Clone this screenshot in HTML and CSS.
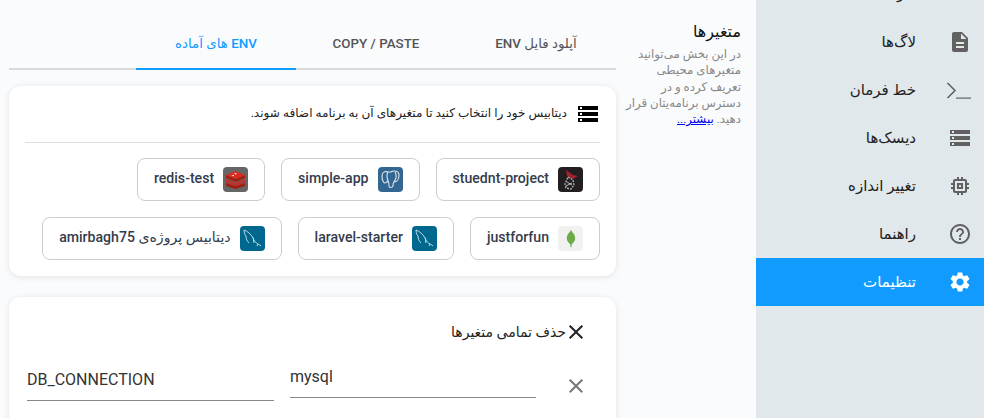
FILE: index.html
```html
<!DOCTYPE html>
<html lang="fa" dir="rtl">
<head>
    <meta charset="UTF-8">
    <title>متغیرها</title>
    <link rel="stylesheet" href="styles.css">
</head>
<body>
    <div class="layout">
        <!-- Sidebar -->
        <nav class="sidebar">
            <a class="nav-item"><span class="nav-icon"></span><span>کارها</span></a>
            <a class="nav-item">
                <span class="nav-icon"><svg width="24" height="24" viewBox="0 0 24 24"><path d="M14 2H6c-1.100 0-2 .9-2 2v16c0 1.100.9 2 2 2h12c1.100 0 2-.9 2-2V8l-6-6zm2 16H8v-2h8v2zm0-4H8v-2h8v2zm-3-5V3.500L18.500 9H13z"/></svg></span>
                <span>لاگ‌ها</span>
            </a>
            <a class="nav-item">
                <span class="nav-icon"><svg width="26" height="24" viewBox="0 0 26 24"><path class="term-line" d="M1.500 5L9 12.500 1.500 20"/><path d="M10 19.500h15v1.200H10z"/></svg></span>
                <span>خط فرمان</span>
            </a>
            <a class="nav-item">
                <span class="nav-icon"><svg width="24" height="24" viewBox="0 0 24 24"><path d="M2 20h20v-4H2v4zm2-3h2v2H4v-2zM2 4v4h20V4H2zm4 3H4V5h2v2zm-4 7h20v-4H2v4zm2-3h2v2H4v-2z"/></svg></span>
                <span>دیسک‌ها</span>
            </a>
            <a class="nav-item">
                <span class="nav-icon"><svg width="24" height="24" viewBox="0 0 24 24"><path d="M15 9H9v6h6V9zm-2 4h-2v-2h2v2zm8-2V9h-2V7c0-1.100-.9-2-2-2h-2V3h-2v2h-2V3H9v2H7c-1.100 0-2 .9-2 2v2H3v2h2v2H3v2h2v2c0 1.100.9 2 2 2h2v2h2v-2h2v2h2v-2h2c1.100 0 2-.9 2-2v-2h2v-2h-2v-2h2zm-4 6H7V7h10v10z"/></svg></span>
                <span>تغییر اندازه</span>
            </a>
            <a class="nav-item">
                <span class="nav-icon"><svg width="24" height="24" viewBox="0 0 24 24"><path d="M11 18h2v-2h-2v2zm1-16C6.480 2 2 6.480 2 12s4.480 10 10 10 10-4.480 10-10S17.520 2 12 2zm0 18c-4.410 0-8-3.590-8-8s3.590-8 8-8 8 3.590 8 8-3.590 8-8 8zm0-14c-2.210 0-4 1.790-4 4h2c0-1.100.9-2 2-2s2 .9 2 2c0 2-3 1.750-3 5h2c0-2.250 3-2.500 3-5 0-2.210-1.790-4-4-4z"/></svg></span>
                <span>راهنما</span>
            </a>
            <a class="nav-item active">
                <span class="nav-icon"><svg width="24" height="24" viewBox="0 0 24 24"><path d="M19.140 12.940c.04-.3.060-.61.060-.94 0-.32-.02-.64-.07-.94l2.030-1.580a.49.49 0 0 0 .12-.61l-1.920-3.320a.488.488 0 0 0-.59-.22l-2.390.96c-.5-.38-1.030-.7-1.620-.94l-.36-2.540a.484.484 0 0 0-.48-.41h-3.840c-.24 0-.43.170-.47.410l-.36 2.540c-.59.240-1.130.570-1.620.94l-2.390-.96c-.22-.08-.47 0-.59.220L2.740 8.870c-.12.210-.08.470.120.610l2.030 1.580c-.05.300-.09.630-.09.940s.02.640.07.940l-2.030 1.580a.49.49 0 0 0-.12.610l1.920 3.320c.12.220.37.290.59.220l2.390-.96c.5.380 1.030.7 1.620.94l.36 2.540c.05.240.24.410.48.410h3.840c.24 0 .44-.17.47-.41l.36-2.540c.59-.24 1.130-.56 1.620-.94l2.390.96c.22.080.47 0 .59-.22l1.920-3.320c.12-.22.070-.47-.12-.61l-2.010-1.580zM12 15.600c-1.980 0-3.600-1.620-3.600-3.600s1.620-3.600 3.600-3.600 3.600 1.620 3.600 3.600-1.620 3.600-3.600 3.600z"/></svg></span>
                <span>تنظیمات</span>
            </a>
        </nav>

        <!-- Help text -->
        <aside class="help">
            <h3>متغیرها</h3>
            <p>در این بخش می‌توانید<br>متغیرهای محیطی<br>تعریف کرده و در<br>دسترس برنامه‌یتان قرار<br>دهید. <a href="#">بیشتر...</a></p>
        </aside>

        <main class="content">
            <div class="tabs">
                <div class="tab">آپلود فایل ENV</div>
                <div class="tab">COPY / PASTE</div>
                <div class="tab active">ENV های آماده</div>
            </div>

            <section class="card">
                <div class="card-head">
                    <svg width="24" height="24" viewBox="0 0 24 24"><path d="M2 20h20v-4H2v4zm2-3h2v2H4v-2zM2 4v4h20V4H2zm4 3H4V5h2v2zm-4 7h20v-4H2v4zm2-3h2v2H4v-2z"/></svg>
                    <span>دیتابیس خود را انتخاب کنید تا متغیرهای آن به برنامه اضافه شوند.</span>
                </div>
                <div class="db-list">
                    <div class="db-row">
                        <button class="db-btn">
                            <span class="db-logo logo-dark"><svg width="19" height="21" viewBox="0 0 19 21"><path d="M5 1l7 5 5 1-5 3-6-3z" fill="#a3222c"/><path d="M7 8l5 3 1 5-3 4-5-1-1-4z" fill="none" stroke="#b9b9b9" stroke-width="1.200" stroke-dasharray="2 1"/><path d="M6 13l5 3M5 17l6-3" stroke="#e4e4e4" stroke-width=".8"/></svg></span>
                            <span>stuednt-project</span>
                        </button>
                        <button class="db-btn">
                            <span class="db-logo logo-pg"><svg width="21" height="21" viewBox="0 0 21 21" fill="none" stroke="#dfe8f0" stroke-width="1.100"><path d="M8 3C5 2 2 3 2 7c0 3 1 7 3 7 1 0 2-1 3-2 1 1 1 3 1 5s3 2 4 0c0-2 0-3 1-4 3 0 5-3 5-7 0-3-2-4-5-4-1 0-2 0-3 1-1 0-2 0-3 0z"/><path d="M8 3C6 6 7 9 8 12M15 3c2 3 1 7-1 10"/></svg></span>
                            <span>simple-app</span>
                        </button>
                        <button class="db-btn">
                            <span class="db-logo logo-redis"><svg width="21" height="18" viewBox="0 0 21 18"><path d="M1 12l9.500 3 9.500-3v3l-9.500 3L1 15z" fill="#a41e11"/><path d="M1 8l9.500 4L20 8v3l-9.500 4L1 11z" fill="#c6302b"/><path d="M1 4l9.500 4L20 4v3l-9.500 4L1 7z" fill="#a41e11"/><path d="M10.500 0L20 4l-9.500 4L1 4z" fill="#d82c20"/><path d="M9 2l3 .5-1.500 1zM6 4.500l3-.5 0 1.200z" fill="#fff"/></svg></span>
                            <span>redis-test</span>
                        </button>
                    </div>
                    <div class="db-row">
                        <button class="db-btn">
                            <span class="db-logo logo-mongo"><svg width="10" height="22" viewBox="0 0 12 22"><path d="M6 0c1 3 5 5 5 10 0 4-3 6-4 7l-.5 4h-1L5 17c-1-1-4-3-4-7 0-5 4-7 5-10z" fill="#6cac48"/></svg></span>
                            <span>justforfun</span>
                        </button>
                        <button class="db-btn">
                            <span class="db-logo logo-mysql"><svg width="21" height="21" viewBox="0 0 21 21" fill="none" stroke="#cfe3ec" stroke-width=".9"><path d="M2 2c3 1 7 4 9 8 1 3 3 5 5 6 1 .5 2 1 3 2M2 2c0 3 1 5 2 6 0 3 1 5 3 7M11 10c1-1 0 3 1 5M16 16l-1 2"/></svg></span>
                            <span>laravel-starter</span>
                        </button>
                        <button class="db-btn">
                            <span class="db-logo logo-mysql"><svg width="21" height="21" viewBox="0 0 21 21" fill="none" stroke="#cfe3ec" stroke-width=".9"><path d="M2 2c3 1 7 4 9 8 1 3 3 5 5 6 1 .5 2 1 3 2M2 2c0 3 1 5 2 6 0 3 1 5 3 7M11 10c1-1 0 3 1 5M16 16l-1 2"/></svg></span>
                            <span>دیتابیس پروژه‌ی amirbagh75</span>
                        </button>
                    </div>
                </div>
            </section>

            <section class="card vars">
                <div class="remove-all">
                    <svg width="24" height="24" viewBox="0 0 24 24"><path d="M19 6.410L17.590 5 12 10.590 6.410 5 5 6.410 10.590 12 5 17.590 6.410 19 12 13.410 17.590 19 19 17.590 13.410 12z"/></svg>
                    <span>حذف تمامی متغیرها</span>
                </div>
                <div class="var-row">
                    <svg class="var-remove" width="24" height="24" viewBox="0 0 24 24"><path d="M19 6.410L17.590 5 12 10.590 6.410 5 5 6.410 10.590 12 5 17.590 6.410 19 12 13.410 17.590 19 19 17.590 13.410 12z"/></svg>
                    <div class="var-field value">mysql</div>
                    <div class="var-field key">DB_CONNECTION</div>
                </div>
            </section>
        </main>
    </div>
</body>
</html>
```
FILE: styles.css
```css
html, body {
    height: 100%;
    margin: 0;
    overflow: hidden;
}
body {
    background-color: #fafbfd;
    color: #222;
    font-family: Roboto, "DejaVu Sans", sans-serif;
}
.layout {
    display: flex;
    height: 418px;
    overflow: hidden;
}

/* sidebar */
.sidebar {
    width: 228px;
    flex-shrink: 0;
    background-color: #e1e8ec;
    margin-top: -30px;
    height: 448px;
}
.nav-item {
    display: flex;
    align-items: center;
    height: 48px;
    font-size: 15px;
    color: #222;
}
.nav-icon {
    width: 56px;
    padding-right: 12px;
    display: flex;
    flex-shrink: 0;
}
.nav-icon svg {
    fill: #616161;
}
.nav-icon .term-line {
    fill: none;
    stroke: #616161;
    stroke-width: 1.6;
}
.nav-item.active {
    background-color: #119bff;
    color: #fff;
}
.nav-item.active .nav-icon svg {
    fill: #fff;
}

/* help column */
.help {
    width: 117px;
    flex-shrink: 0;
    padding: 23px 15px 0 0;
}
.help h3 {
    margin: 0 0 5px;
    font-size: 16px;
    font-weight: normal;
    color: #111;
    line-height: 18px;
}
.help p {
    margin: 0;
    font-size: 11.8px;
    line-height: 16.3px;
    color: #888;
    white-space: nowrap;
}
.help a {
    color: #00e;
    text-decoration: underline;
}

/* main column */
.content {
    width: 607px;
    flex-shrink: 0;
    margin-right: 8px;
}
.tabs {
    display: flex;
    height: 70px;
    box-shadow: inset 0 -2px 0 #d8d9db;
    margin-bottom: 16px;
}
.tab {
    width: 160px;
    padding-top: 36px;
    box-sizing: border-box;
    text-align: center;
    font-size: 13.4px;
    font-weight: 500;
    color: #555;
}
.tab.active {
    color: #119bff;
    border-bottom: 2px solid #119bff;
}
.card {
    background-color: #fff;
    border-radius: 12px;
    box-shadow: 0 1px 6px rgba(0, 0, 0, 0.1);
    padding: 16px;
    margin-bottom: 21px;
}
.card-head {
    display: flex;
    align-items: flex-start;
    gap: 9px;
    height: 40px;
    border-bottom: 1px solid #ddd;
    font-size: 12.1px;
    line-height: 23px;
    color: #222;
}
.db-list {
    display: flex;
    flex-direction: column;
    gap: 16px;
    margin-top: 15px;
}
.db-row {
    display: flex;
    gap: 16px;
}
.db-btn {
    display: flex;
    align-items: center;
    gap: 9px;
    height: 43px;
    padding: 0 16px;
    background: #fff;
    border: 1px solid #ccc;
    border-radius: 8px;
    font-family: inherit;
    font-size: 14.1px;
    font-weight: 500;
    color: #333c4d;
}
.db-btn span:last-child {
    margin-bottom: 3px;
}
.db-logo {
    width: 25px;
    height: 25px;
    border-radius: 4px;
    display: flex;
    align-items: center;
    justify-content: center;
}
.logo-dark { background-color: #231f20; }
.logo-pg { background-color: #336791; }
.logo-redis { background-color: #666; }
.logo-mongo { background-color: #f1f1f1; }
.logo-mysql { background-color: #00678f; }

/* variables card */
.vars {
    padding-top: 23px;
    height: 200px;
}
.remove-all {
    display: flex;
    align-items: center;
    font-size: 14px;
    font-weight: 500;
    padding-right: 12px;
}
.remove-all svg {
    fill: #222;
    margin-left: -2px;
}
.var-row {
    display: flex;
    align-items: flex-start;
    gap: 16px;
    margin-top: 18px;
    padding-right: 12px;
}
.var-remove {
    fill: #777;
    margin: 12px 0 0 12px;
}
.var-field {
    width: 246px;
    direction: ltr;
    text-align: left;
    font-size: 16px;
    color: #333;
    border-bottom: 1px solid #888;
    box-sizing: border-box;
}
.var-field.value {
    height: 36px;
    line-height: 30px;
}
.var-field.key {
    height: 39px;
    line-height: 36px;
    width: 247px;
}
```
